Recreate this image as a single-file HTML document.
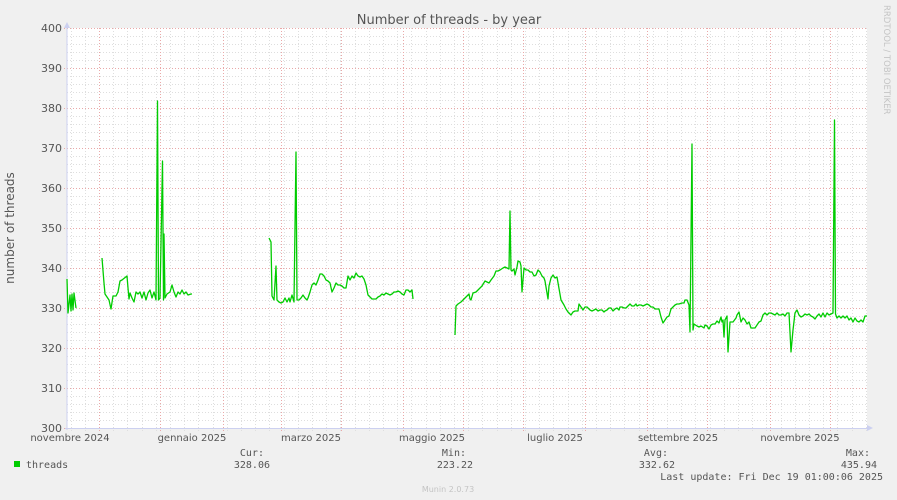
<!DOCTYPE html>
<html><head><meta charset="utf-8"><style>
html,body{margin:0;padding:0;background:#f0f0f0;}
svg{display:block;}
text{font-family:"DejaVu Sans","Liberation Sans",sans-serif;fill:#555;}
.m{font-family:"DejaVu Sans Mono","Liberation Mono",monospace;font-size:10px;fill:#555;}
</style></head><body>
<svg id="s" width="897" height="500" xmlns="http://www.w3.org/2000/svg">
<rect x="67" y="28" width="800" height="400" fill="#fff"/>
<g id="grid"></g>
<line x1="67" y1="24" x2="67" y2="430" stroke="#ccd0f0" stroke-width="1"/>
<line x1="65" y1="428.5" x2="870" y2="428.5" stroke="#ccd0f0" stroke-width="1"/>
<polygon points="64,28 70,28 67,22" fill="#ccd0f0"/>
<polygon points="867,425 867,431 873,428" fill="#ccd0f0"/>
<g id="data" fill="none" stroke="#00cc00" stroke-width="1.3" stroke-linejoin="round"></g>
<text x="449" y="24" font-size="13" text-anchor="middle">Number of threads - by year</text>
<text transform="translate(14,228) rotate(-90)" font-size="12" text-anchor="middle">number of threads</text>
<text transform="translate(884,5) rotate(90)" font-size="8.5" style="fill:#c4c4c4">RRDTOOL / TOBI OETIKER</text>
<g id="ylab" font-size="11"></g>
<g font-size="10" text-anchor="middle">
<text x="70" y="441">novembre 2024</text>
<text x="192" y="441">gennaio 2025</text>
<text x="311" y="441">marzo 2025</text>
<text x="432" y="441">maggio 2025</text>
<text x="555" y="441">luglio 2025</text>
<text x="678" y="441">settembre 2025</text>
<text x="800" y="441">novembre 2025</text>
</g>
<rect x="14" y="461" width="6" height="6" fill="#00cc00"/>
<text class="m" x="26" y="468">threads</text>
<text class="m" x="264" y="456" text-anchor="end">Cur:</text>
<text class="m" x="270" y="468" text-anchor="end">328.06</text>
<text class="m" x="466" y="456" text-anchor="end">Min:</text>
<text class="m" x="473" y="468" text-anchor="end">223.22</text>
<text class="m" x="668" y="456" text-anchor="end">Avg:</text>
<text class="m" x="675" y="468" text-anchor="end">332.62</text>
<text class="m" x="870" y="456" text-anchor="end">Max:</text>
<text class="m" x="877" y="468" text-anchor="end">435.94</text>
<text class="m" x="883" y="480" text-anchor="end">Last update: Fri Dec 19 01:00:06 2025</text>
<text x="448" y="492" font-size="8" text-anchor="middle" style="fill:#c4c4c4">Munin 2.0.73</text>
</svg>
<script>
var NS="http://www.w3.org/2000/svg";
function el(p,t,a){var e=document.createElementNS(NS,t);for(var k in a)e.setAttribute(k,a[k]);p.appendChild(e);return e;}
var g=document.getElementById('grid');
var months=[99,160,223,281,341,403,463,523,585,647,707,770,830];
var minor=[];
for(var x=99;x>67;x-=14.2)minor.push(x);
for(var x=99+14.2;x<867;x+=14.2)minor.push(x);
minor.forEach(function(x){x=Math.round(x)+0.5;el(g,'line',{x1:x,y1:28,x2:x,y2:431,stroke:'#dedede','stroke-dasharray':'1,2'});});
for(var y=28;y<428;y+=8){if((y-28)%40==0)continue;el(g,'line',{x1:67,y1:y+0.5,x2:867,y2:y+0.5,stroke:'#dedede','stroke-dasharray':'1,2'});}
months.forEach(function(x){el(g,'line',{x1:x+0.5,y1:28,x2:x+0.5,y2:432,stroke:'#eaa8a8','stroke-dasharray':'1,2'});});
var yl=document.getElementById('ylab');
for(var v=300;v<=400;v+=10){var y=428-(v-300)*4;el(g,'line',{x1:64,y1:y+0.5,x2:867,y2:y+0.5,stroke:'#eaa8a8','stroke-dasharray':'1,2'});var t=el(yl,'text',{x:62,y:y+4,'text-anchor':'end'});t.textContent=v;}
var segs=[
"67,279 68,313 70,295 71,311 72,294 73,310 74,293 76,308",
"102,258 104,283 105,294 107,297 109,300 111,309 113,296 116,296 118,292 120,281 122,280 127,276 128,288 129,299 130,293 132,298 134,302 136,292 138,294 140,292 142,298 144,292 146,300 148,293 150,290 152,298 154,292 156,300 157.5,101 158.5,300 160,298 162.5,161 163.5,300 164,234 165,298 167,294 170,292 172,285 174,292 176,297 178,292 180,294 182,290 184,294 186,292 188,295 191,294 192,294",
"269,238 271,242 272,296 274,300 276,266 277,300 279,302 281,303 283,302 285,298 287,302 289,298 290,302 292,295 294,302 296,152 297,300 299,300 301,298 303,295 305,298 307,300 308,298 310,292 312,285 314,283 316,285 318,280 320,274 322,274 324,276 326,280 328,281 330,283 332,292 334,288 336,283 338,285 340,285 342,286 344,288 346,288 348,276 350,280 352,276 354,278 356,273 358,276 360,277 362,276 364,279 366,285 368,295 370,297 372,299 374,299 376,299 378,297 380,296 382,294 384,295 386,293 388,294 390,295 392,294 394,292 396,292 398,291 400,292 402,294 404,295 406,290 408,290 410,292 412,290 413,299",
"455,335 456,306 458,304 461,302 469,294 470,299 471,300 473,293 476,292 478,290 480,288 482,286 485,281 487,282 489,283 491,280 494,276 496,271 498,271 500,270 503,268 505,267 507,268 509,269 510,211 511,270 512,271 514,269 515,275 517,267 518,261 520,262 521,266 522,292 524,268 526,270 528,270 530,272 532,272 534,276 536,275 538,270 540,272 542,276 544,278 545,281 548,299 549,286 551,278 553,275 555,278 557,277 561,300 564,305 566,309 568,312 571,315 573,312 575,311 578,311 579,304 581,307 583,310 585,307 587,307 590,310 592,311 594,310 596,309 598,311 600,310 602,310 604,312 605,311 607,310 609,308 611,308 613,311 615,309 617,308 619,310 620,307 622,307 624,308 626,308 628,306 630,304 632,306 634,306 636,304 637,306 639,305 641,305 643,306 645,305 647,304 649,305 651,307 653,307 655,309 659,309 661,317 663,323 665,320 667,317 669,316 671,309 673,307 675,305 677,304 679,304 682,303 684,303 685,300 687,300 689,305 690,332 692,144 693,330 694,324 697,326 699,327 701,326 704,328 705,325 707,326 709,329 711,325 713,324 715,324 717,321 719,323 721,317 722,322 723,320 724,337 725,320 727,316 728,352 730,322 733,322 736,318 737,315 739,312 741,322 743,318 745,320 747,324 749,322 751,328 755,328 759,322 761,321 763,315 765,313 767,315 769,313 771,313 775,315 777,313 779,315 781,315 783,314 785,316 787,313 789,313 791,352 793,330 795,313 797,310 799,315 801,317 803,316 805,314 807,315 809,314 811,316 813,317 815,319 817,316 819,314 821,317 823,313 825,317 827,313 829,315 831,314 833,313 834.5,120 835.5,314 837,318 839,316 841,318 843,316 845,318 847,316 849,320 851,318 853,322 855,318 857,321 859,322 861,320 863,322 865,316 867,316"];
var d=document.getElementById('data');
segs.forEach(function(s){el(d,'polyline',{points:s});});
</script>
</body></html>
